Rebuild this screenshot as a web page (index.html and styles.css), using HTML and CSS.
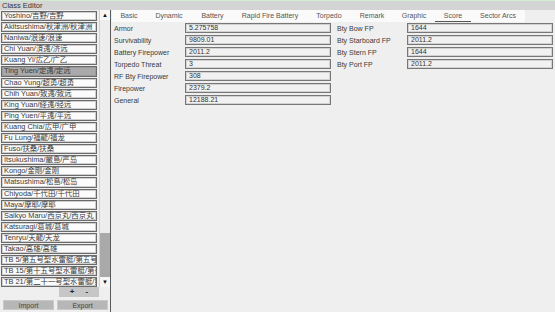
FILE: index.html
```html
<!DOCTYPE html>
<html>
<head>
<meta charset="utf-8">
<link rel="stylesheet" href="styles.css">
</head>
<body>
<div class="titlebar">Class Editor</div>
<div class="main">
  <div class="left">
    <div class="listarea">
      <div class="list">
        <div class="item">Yoshino/吉野/吉野</div>
        <div class="item">Akitsushima/秋津洲/秋津洲</div>
        <div class="item">Naniwa/浪速/浪速</div>
        <div class="item">Chi Yuan/済遠/济远</div>
        <div class="item">Kuang Yi/広乙/广乙</div>
        <div class="item sel">Ting Yuen/定遠/定远</div>
        <div class="item">Chao Yung/超勇/超勇</div>
        <div class="item">Chih Yuan/致遠/致远</div>
        <div class="item">King Yuan/経遠/经远</div>
        <div class="item">Ping Yuen/平遠/平远</div>
        <div class="item">Kuang Chia/広甲/广甲</div>
        <div class="item">Fu Lung/福龍/福龙</div>
        <div class="item">Fuso/扶桑/扶桑</div>
        <div class="item">Itsukushima/厳島/严岛</div>
        <div class="item">Kongo/金剛/金刚</div>
        <div class="item">Matsushima/松島/松岛</div>
        <div class="item">Chiyoda/千代田/千代田</div>
        <div class="item">Maya/摩耶/摩耶</div>
        <div class="item">Saikyo Maru/西京丸/西京丸</div>
        <div class="item">Katsuragi/葛城/葛城</div>
        <div class="item">Tenryu/天龍/天龙</div>
        <div class="item">Takao/高雄/高雄</div>
        <div class="item">TB 5/第五号型水雷艇/第五号型鱼雷艇</div>
        <div class="item">TB 15/第十五号型水雷艇/第十五号型鱼雷艇</div>
        <div class="item">TB 21/第二十一号型水雷艇/第二十一号型鱼雷艇</div>
      </div>
      <div class="scroll">
        <div class="arrow">▲</div>
        <div class="track"><div class="thumb"></div></div>
        <div class="arrow">▼</div>
      </div>
    </div>
    <div class="pmrow"><div class="pm"><span>+</span><span>-</span></div></div>
    <div class="btnrow">
      <div class="btn">Import</div>
      <div class="btn">Export</div>
    </div>
  </div>
  <div class="right">
    <div class="tabs">
      <div class="tab t1">Basic</div>
      <div class="tab t2">Dynamic</div>
      <div class="tab t3">Battery</div>
      <div class="tab t4">Rapid Fire Battery</div>
      <div class="tab t5">Torpedo</div>
      <div class="tab t6">Remark</div>
      <div class="tab t7">Graphic</div>
      <div class="tab t8 active">Score</div>
      <div class="tab t9">Sector Arcs</div>
    </div>
    <div class="form">
      <div class="col">
        <div class="row"><div class="lbl">Armor</div><div class="field">5.275758</div></div>
        <div class="row"><div class="lbl">Survivability</div><div class="field">9809.01</div></div>
        <div class="row"><div class="lbl">Battery Firepower</div><div class="field">2011.2</div></div>
        <div class="row"><div class="lbl">Torpedo Threat</div><div class="field">3</div></div>
        <div class="row"><div class="lbl">RF Bty Firepower</div><div class="field">308</div></div>
        <div class="row"><div class="lbl">Firepower</div><div class="field">2379.2</div></div>
        <div class="row"><div class="lbl">General</div><div class="field">12188.21</div></div>
      </div>
      <div class="col col2">
        <div class="row"><div class="lbl">Bty Bow FP</div><div class="field">1644</div></div>
        <div class="row"><div class="lbl">Bty Starboard FP</div><div class="field">2011.2</div></div>
        <div class="row"><div class="lbl">Bty Stern FP</div><div class="field">1644</div></div>
        <div class="row"><div class="lbl">Bty Port FP</div><div class="field">2011.2</div></div>
      </div>
    </div>
  </div>
</div>
</body>
</html>
```
FILE: styles.css
```css
* { box-sizing: border-box; }
html, body { margin: 0; padding: 0; }
body {
  width: 555px; height: 312px; overflow: hidden;
  background: #efefef;
  font-family: "Liberation Sans", "Noto Sans CJK SC", sans-serif;
  font-size: 7px;
  color: #3a3a3a;
}
.titlebar {
  height: 10px;
  background: #d4d4d4;
  border-top: 1px solid #d2ecd2;
  padding-left: 2px;
  line-height: 9px;
  font-size: 7.5px;
  color: #333;
}
.main { display: flex; height: 302px; }
.left {
  width: 111px;
  border-right: 1px solid #5a5a5a;
  display: flex; flex-direction: column;
}
.listarea { display: flex; height: 277px; }
.list {
  width: 99px; padding: 1px 2px 0 1px;
  overflow: hidden;
}
.item {
  height: 10.1px; margin-bottom: 1px;
  border: 1px solid #6a6a6a;
  box-shadow: inset 0 0 0 1px #cfcfcf;
  background: #fbfbfb;
  padding-left: 2px;
  line-height: 8px;
  font-size: 7.4px;
  white-space: nowrap; overflow: hidden;
}
.item.sel { background: #a9a9a9; box-shadow: inset 0 0 0 1px #9a9a9a; }
.scroll {
  width: 11px;
  display: flex; flex-direction: column;
  border-left: 1px solid #cfcfcf;
  background: #ededed;
}
.arrow {
  height: 10px; width: 10px;
  background: #f6f6f6;
  font-size: 6px; line-height: 10px; text-align: center; color: #111;
}
.track { flex: 1; display: flex; flex-direction: column; justify-content: flex-end; }
.thumb { height: 44px; background: #a9a9a9; }
.pmrow { display: flex; justify-content: flex-end; padding: 0 11px 0 0; height: 11px; }
.pm {
  width: 40px; height: 10px; background: #c6c6c6;
  display: flex; justify-content: center; gap: 11px;
  font-size: 8px; line-height: 10px; font-weight: bold; color: #222;
}
.btnrow { display: flex; gap: 3px; padding: 2px 2px 0 3px; }
.btn {
  flex: 1; height: 10px; background: #b7b7b7;
  text-align: center; line-height: 10px; color: #444;
  border: 1px solid #c9c9c9;
}
.right { flex: 1; display: flex; flex-direction: column; padding-left: 1px; }
.tabs {
  display: flex; height: 12px; width: 413px;
  background: #fafafa;
}
.tab {
  flex: none; text-align: center; white-space: nowrap;
  line-height: 11px; color: #555;
}
.t1 { width: 34px; }
.t2 { width: 46px; }
.t3 { width: 41px; }
.t4 { width: 74px; }
.t5 { width: 44px; }
.t6 { width: 42px; }
.t7 { width: 42px; }
.t8 { width: 36px; }
.t9 { width: 54px; }
.tab.active { box-shadow: inset 0 -1px 0 #555; }
.form { display: flex; padding: 1px 3px 0 2px; gap: 6px; }
.col { display: flex; flex-direction: column; gap: 2px; }
.row { display: flex; height: 10px; align-items: center; }
.lbl { width: 71px; white-space: nowrap; }
.col .field { width: 146px; }
.col2 .lbl { width: 70px; }
.col2 .field { width: 146px; }
.field {
  height: 10px;
  border: 1px solid #777;
  box-shadow: inset 0 0 0 1px #d2d2d2;
  background: #f1f1f1;
  padding-left: 3px;
  line-height: 8px;
  color: #333;
}
```
